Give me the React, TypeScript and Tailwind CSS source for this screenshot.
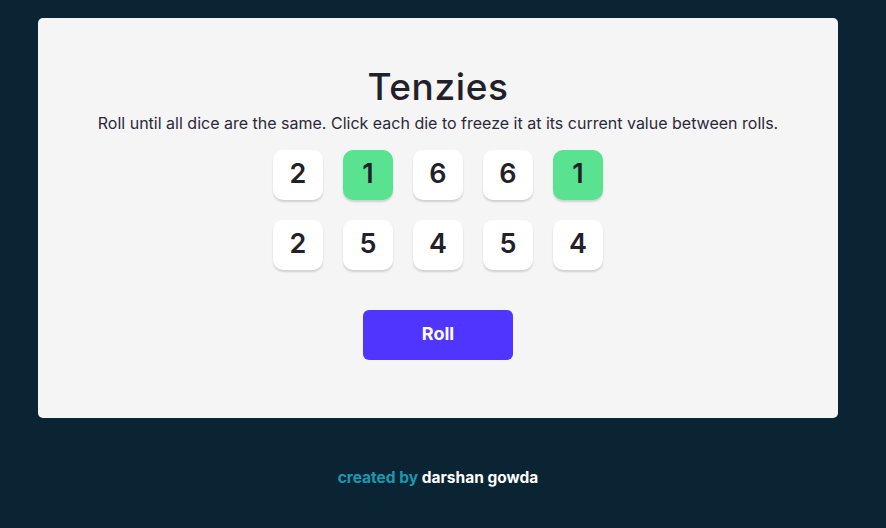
import React from 'react';

const dice = [
  { value: 2, held: false },
  { value: 1, held: true },
  { value: 6, held: false },
  { value: 6, held: false },
  { value: 1, held: true },
  { value: 2, held: false },
  { value: 5, held: false },
  { value: 4, held: false },
  { value: 5, held: false },
  { value: 4, held: false },
];

const App: React.FC = () => {
  return (
    <div className="min-h-[528px] bg-[#0B2434] pt-[18px] pl-[38px] font-['Inter',sans-serif]">
      <main className="w-[800px] h-[400px] bg-[#F5F5F5] rounded-[5px] flex flex-col items-center pt-[45px]">
        <h1 className="text-[37px] leading-[48px] font-medium text-[#222129] tracking-[0.6px]">Tenzies</h1>
        <p className="text-[16px] leading-[24px] text-[#2B283A]">
          Roll until all dice are the same. Click each die to freeze it at its current value between rolls.
        </p>
        <div className="grid grid-cols-5 gap-5 mt-[15px]">
          {dice.map((die, index) => (
            <div
              key={index}
              className={`w-[50px] h-[50px] rounded-[10px] flex items-center justify-center shadow-[0_2px_2px_rgba(0,0,0,0.15)] cursor-pointer text-[27px] font-semibold text-[#222129] pb-[2px] ${
                die.held ? 'bg-[#59E391]' : 'bg-white'
              }`}
            >
              {die.value}
            </div>
          ))}
        </div>
        <button className="mt-10 w-[150px] h-[50px] rounded-[6px] bg-[#5035FF] text-white text-[18px] font-bold pb-[3px]">
          Roll
        </button>
      </main>
      <footer className="w-[800px] text-center mt-[50px] text-[15.5px] leading-[20px] font-bold">
        <span className="text-[#1A98B0]">created by </span>
        <span className="text-white">darshan gowda</span>
      </footer>
    </div>
  );
};

export default App;
